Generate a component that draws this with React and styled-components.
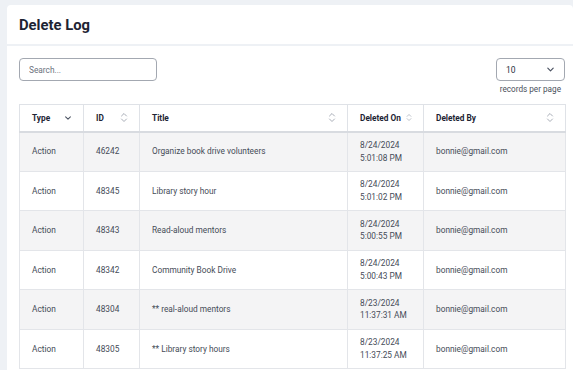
import React from "react";
import styled, { createGlobalStyle } from "styled-components";

const GlobalStyle = createGlobalStyle`
  *, *:before, *:after { box-sizing: border-box; }
  body {
    margin: 0;
    background: #ffffff;
    font-family: Roboto, "Liberation Sans", Arial, sans-serif;
    color: #3d4350;
  }
`;

const rows = [
  { type: "Action", id: "46242", title: "Organize book drive volunteers", date: "8/24/2024", time: "5:01:08 PM", by: "bonnie@gmail.com" },
  { type: "Action", id: "48345", title: "Library story hour", date: "8/24/2024", time: "5:01:02 PM", by: "bonnie@gmail.com" },
  { type: "Action", id: "48343", title: "Read-aloud mentors", date: "8/24/2024", time: "5:00:55 PM", by: "bonnie@gmail.com" },
  { type: "Action", id: "48342", title: "Community Book Drive", date: "8/24/2024", time: "5:00:43 PM", by: "bonnie@gmail.com" },
  { type: "Action", id: "48304", title: "** real-aloud mentors", date: "8/23/2024", time: "11:37:31 AM", by: "bonnie@gmail.com" },
  { type: "Action", id: "48305", title: "** Library story hours", date: "8/23/2024", time: "11:37:25 AM", by: "bonnie@gmail.com" },
];

const ChevronDown = ({ size = 8 }) => (
  <svg width={size} height={size} viewBox="0 0 10 10" fill="none">
    <path d="M2 3.5 L5 6.5 L8 3.5" stroke="#4a5160" strokeWidth="1.3" strokeLinecap="round" strokeLinejoin="round" />
  </svg>
);

const SortIcon = () => (
  <svg width="8" height="11" viewBox="0 0 8 11" fill="none">
    <path d="M1.5 4 L4 1.5 L6.5 4" stroke="#a9aeb8" strokeWidth="1" strokeLinecap="round" strokeLinejoin="round" />
    <path d="M1.5 7 L4 9.5 L6.5 7" stroke="#a9aeb8" strokeWidth="1" strokeLinecap="round" strokeLinejoin="round" />
  </svg>
);

const App = () => {
  return (
    <>
      <GlobalStyle />
      <Page>
        <Card>
          <CardHeader>
            <Heading>Delete Log</Heading>
          </CardHeader>
          <Body>
            <Controls>
              <SearchInput placeholder="Search..." />
              <PageSize>
                <SelectBox>
                  <span>10</span>
                  <ChevronDown size={9} />
                </SelectBox>
                <Hint>records per page</Hint>
              </PageSize>
            </Controls>
            <Table>
              <colgroup>
                <col style={{ width: 64 }} />
                <col style={{ width: 56 }} />
                <col style={{ width: 208 }} />
                <col style={{ width: 76 }} />
                <col style={{ width: 142 }} />
              </colgroup>
              <thead>
                <tr>
                  <Th>
                    <HeadInner $spread>
                      Type <ChevronDown />
                    </HeadInner>
                  </Th>
                  <Th>
                    <HeadInner $spread>
                      ID <SortIcon />
                    </HeadInner>
                  </Th>
                  <Th>
                    <HeadInner $spread>
                      Title <SortIcon />
                    </HeadInner>
                  </Th>
                  <Th>
                    <HeadInner>
                      Deleted On <SortIcon />
                    </HeadInner>
                  </Th>
                  <Th>
                    <HeadInner $spread>
                      Deleted By <SortIcon />
                    </HeadInner>
                  </Th>
                </tr>
              </thead>
              <tbody>
                {rows.map((r, i) => (
                  <Row key={r.id} $striped={i % 2 === 0}>
                    <Td>{r.type}</Td>
                    <Td>{r.id}</Td>
                    <Td>{r.title}</Td>
                    <Td>
                      {r.date}
                      <br />
                      {r.time}
                    </Td>
                    <Td>{r.by}</Td>
                  </Row>
                ))}
              </tbody>
            </Table>
          </Body>
        </Card>
      </Page>
    </>
  );
};

const Page = styled.div`
  width: 573px;
  height: 370px;
  background: #eef1f5;
  padding: 5px 0 0 7px;
  overflow: hidden;
`;

const Card = styled.div`
  background: #ffffff;
  border-radius: 4px 4px 0 0;
  height: 100%;
`;

const CardHeader = styled.div`
  height: 41px;
  padding: 2px 12px 0;
  display: flex;
  align-items: center;
  border-bottom: 2px solid #eef1f5;
`;

const Heading = styled.h1`
  margin: 0;
  font-size: 14.8px;
  line-height: 1;
  font-weight: 700;
  color: #1d2433;
`;

const Body = styled.div`
  padding: 12px 8px 0 12px;
`;

const Controls = styled.div`
  display: flex;
  justify-content: space-between;
  align-items: flex-start;
  height: 46px;
`;

const SearchInput = styled.input`
  width: 138px;
  height: 23px;
  border: 1px solid #a3a8b1;
  border-radius: 4px;
  padding: 0 9px;
  font-family: inherit;
  font-size: 8.3px;
  color: #3d4350;
  outline: none;
  &::placeholder { color: #6b717c; }
`;

const PageSize = styled.div`
  display: flex;
  flex-direction: column;
  align-items: flex-end;
  gap: 3px;
`;

const SelectBox = styled.div`
  width: 69px;
  height: 23px;
  border: 1px solid #a3a8b1;
  border-radius: 4px;
  display: flex;
  align-items: center;
  justify-content: space-between;
  padding: 0 9px 0 9px;
  font-size: 8.5px;
  color: #2b3140;
`;

const Hint = styled.div`
  font-size: 8.2px;
  color: #4a505b;
  padding-right: 4px;
`;

const Table = styled.table`
  width: 546px;
  border-collapse: collapse;
  table-layout: fixed;
  font-size: 8.3px;
`;

const Th = styled.th`
  height: 27px;
  padding: 0 11px 0 12px;
  text-align: left;
  font-weight: 700;
  font-size: 8.3px;
  color: #1d2433;
  border: 1px solid #dfe2e7;
  border-bottom: 2px solid #d8dbe0;
  background: #ffffff;
`;

const HeadInner = styled.div`
  display: flex;
  align-items: center;
  justify-content: ${(p) => (p.$spread ? "space-between" : "flex-start")};
  gap: 5px;
  white-space: nowrap;
`;

const Row = styled.tr`
  background: ${(p) => (p.$striped ? "#f4f4f5" : "#ffffff")};
`;

const Td = styled.td`
  height: 39.5px;
  padding: 0 11px 0 12px;
  border: 1px solid #e3e5e9;
  color: #454b57;
  line-height: 12.5px;
  vertical-align: middle;
`;

export default App;
